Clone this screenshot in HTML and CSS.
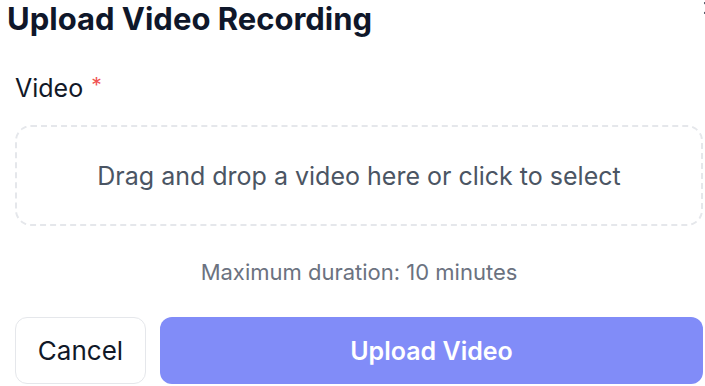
FILE: index.html
```html
<!DOCTYPE html>
<html>
<head>
<meta charset="utf-8">
<link rel="stylesheet" href="styles.css">
</head>
<body>
<div class="modal">
  <div class="header">
    <h2 class="title">Upload Video Recording</h2>
    <button class="close" aria-label="Close"><svg width="16" height="16" viewBox="0 0 16 16"><path d="M3 3L13 13M13 3L3 13" stroke="#374151" stroke-width="2" stroke-linecap="round"/></svg></button>
  </div>
  <div class="body">
    <label class="label">Video<span class="req">*</span></label>
    <div class="dropzone">Drag and drop a video here or click to select</div>
    <p class="hint">Maximum duration: 10 minutes</p>
    <div class="actions">
      <button class="btn cancel">Cancel</button>
      <button class="btn primary">Upload Video</button>
    </div>
  </div>
</div>
</body>
</html>
```
FILE: styles.css
```css
html, body {
  margin: 0;
  padding: 0;
  background: #ffffff;
  overflow: hidden;
}
body {
  font-family: Inter, "Noto Sans", sans-serif;
  width: 705px;
  height: 386px;
}
.modal {
  position: relative;
  width: 705px;
  height: 386px;
}
.header {
  padding-left: 7px;
}
.title {
  margin: 0;
  font-size: 31px;
  line-height: 38px;
  font-weight: 700;
  letter-spacing: 0;
  color: #0f172a;
}
.close {
  position: absolute;
  top: 0;
  right: -13px;
  width: 16px;
  height: 16px;
  padding: 0;
  border: 0;
  background: transparent;
}
.close svg {
  display: block;
}
.body {
  display: flex;
  flex-direction: column;
  padding: 35px 2px 0 15px;
}
.label {
  font-size: 25px;
  line-height: 30px;
  color: #111827;
  font-weight: 400;
}
.req {
  color: #f05252;
  margin-left: 8px;
  font-size: 21px;
  vertical-align: top;
  position: relative;
  top: -2px;
}
.dropzone {
  margin-top: 22px;
  height: 97px;
  border: 2px dashed #e5e7eb;
  border-radius: 16px;
  display: flex;
  align-items: center;
  justify-content: center;
  font-size: 25px;
  color: #4b5563;
}
.hint {
  margin: 33px 0 0;
  text-align: center;
  font-size: 22px;
  line-height: 26px;
  color: #6b7280;
}
.actions {
  display: flex;
  gap: 14px;
  margin-top: 32px;
}
.btn {
  height: 67px;
  border-radius: 12px;
  font-family: inherit;
}
.cancel {
  width: 131px;
  background: #ffffff;
  border: 1px solid #e5e7eb;
  color: #111827;
  font-size: 26px;
}
.primary {
  flex: 1;
  background: #818cf8;
  border: 0;
  color: #ffffff;
  font-weight: 600;
  font-size: 25px;
}
```
